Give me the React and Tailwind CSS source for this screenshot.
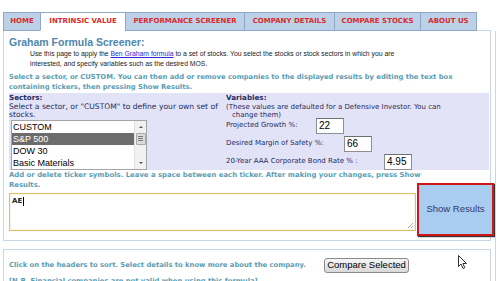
import React from "react";

const tabs = [
  { label: "HOME", w: "w-[38px]" },
  { label: "INTRINSIC VALUE", w: "w-[86px]", active: true },
  { label: "PERFORMANCE SCREENER", w: "w-[120px]" },
  { label: "COMPANY DETAILS", w: "w-[91px]" },
  { label: "COMPARE STOCKS", w: "w-[87px]" },
  { label: "ABOUT US", w: "w-[57px]" },
];

const sectors = ["CUSTOM", "S&P 500", "DOW 30", "Basic Materials"];

function Tabs() {
  return (
    <div className="flex pl-[3px] pt-[12px] relative z-10">
      {tabs.map((t) => (
        <div
          key={t.label}
          className={
            "h-[19px] -ml-px first:ml-0 flex items-center justify-center border border-[#8ea8c6] font-bold text-[7px] text-[#d92b2b] font-['DejaVu_Sans',sans-serif] " +
            t.w +
            (t.active ? " bg-white border-b-white" : " bg-[#bcd1e8]")
          }
        >
          {t.label}
        </div>
      ))}
    </div>
  );
}

function SectorList() {
  return (
    <div className="ml-[2px] w-[136px] h-[50px] border border-[#a5a5a5] bg-white flex">
      <div className="flex-1">
        {sectors.map((s, i) => (
          <div
            key={s}
            className={
              "h-[12px] leading-[12px] pl-[1px] text-[9px] font-['Liberation_Sans',sans-serif] " +
              (i === 1 ? "bg-[#6c6c6c] text-white" : "text-black")
            }
          >
            {s}
          </div>
        ))}
      </div>
      <div className="w-[12px] bg-[#f1f1f1] border-l border-[#e2e2e2] flex flex-col items-center">
        <svg width="12" height="12" viewBox="0 0 12 12">
          <path d="M4 7 L6 5 L8 7 Z" fill="#555" />
        </svg>
        <div className="w-[10px] h-[12px] bg-[#dcdcdc] border border-[#a9a9a9] rounded-[1px] flex flex-col items-center justify-center gap-[1px]">
          <div className="w-[5px] h-px bg-[#777]" />
          <div className="w-[5px] h-px bg-[#777]" />
          <div className="w-[5px] h-px bg-[#777]" />
        </div>
        <div className="flex-1" />
        <svg width="12" height="12" viewBox="0 0 12 12">
          <path d="M4 5 L6 7 L8 5 Z" fill="#555" />
        </svg>
      </div>
    </div>
  );
}

function VarRow({ label, w, value }) {
  return (
    <div className="flex items-center h-[16px]">
      <div className={"shrink-0 whitespace-nowrap " + w}>{label}</div>
      <div className="w-[28px] h-[16px] border border-[#8f8f8f] border-t-[#6f6f6f] bg-white pl-[2px] leading-[14px] text-[10px] text-black font-['Liberation_Sans',sans-serif]">
        {value}
      </div>
    </div>
  );
}

export default function App() {
  return (
    <div className="w-[500px] h-[281px] overflow-hidden bg-white relative font-['Liberation_Sans',sans-serif]">
      <Tabs />
      <div className="flex">
        <div className="ml-[3px] w-[488px] shrink-0">
          <div className="-mt-px border border-[#c7d7e6] pl-[5px] pr-[1px] pt-[5px] pb-[4px]">
            <h1 className="text-[10.5px] font-bold text-[#4e86ae] leading-[13px]">
              Graham Formula Screener:
            </h1>
            <p className="pl-[21px] text-[6.8px] leading-[9.5px] text-[#222] whitespace-nowrap">
              Use this page to apply the{" "}
              <span className="text-[#2b2bd8] underline">Ben Graham formula</span> to a set of stocks. You
              select the stocks or stock sectors in which you are
              <br />
              interested, and specify variables such as the desired MOS.
            </p>
            <p className="mt-[4px] text-[6.8px] leading-[10px] font-bold text-[#5c9db3] font-['DejaVu_Sans',sans-serif] whitespace-nowrap">
              Select a sector, or CUSTOM. You can then add or remove companies to the displayed results by
              editing the text box
              <br />
              containing tickers, then pressing Show Results.
            </p>
            <div className="mt-[1px] h-[77px] bg-[#e3e3f8] flex leading-[8.5px] text-[#1f2d5c] font-['DejaVu_Sans',sans-serif]">
              <div className="w-[217px] shrink-0 pt-[1px] text-[7.6px]">
                <div className="font-bold text-[7.2px]">Sectors:</div>
                <div className="whitespace-nowrap">
                  Select a sector, or "CUSTOM" to define your own set of
                  <br />
                  stocks.
                </div>
                <SectorList />
              </div>
              <div className="flex-1 pt-[1px] text-[7px]">
                <div className="font-bold text-[7.2px]">Variables:</div>
                <div className="whitespace-nowrap">
                  (These values are defaulted for a Defensive Investor. You can
                  <br />
                  <span className="pl-[6px]">change them)</span>
                </div>
                <div className="-mt-[2px] flex flex-col gap-[2px]">
                  <VarRow label="Projected Growth %:" w="w-[90px]" value="22" />
                  <VarRow label="Desired Margin of Safety %:" w="w-[118px]" value="66" />
                  <VarRow label="20-Year AAA Corporate Bond Rate % :" w="w-[158px]" value="4.95" />
                </div>
              </div>
            </div>
            <p className="mt-[1px] text-[6.9px] leading-[9.5px] font-bold text-[#5c9db3] font-['DejaVu_Sans',sans-serif] whitespace-nowrap">
              Add or delete ticker symbols. Leave a space between each ticker. After making your changes,
              press Show
              <br />
              Results.
            </p>
            <div className="flex items-start mt-[3px]">
              <div className="w-[407px] h-[38px] shrink-0 border border-[#e2bd6c] shadow-[inset_0_0_2px_#f2dba8] bg-white relative">
                <div className="pl-[2px] pt-[2px] flex items-center text-[7px] font-bold text-[#222] font-['DejaVu_Sans',sans-serif]">
                  AE<span className="w-px h-[9px] bg-black ml-px" />
                </div>
                <svg className="absolute right-[1px] bottom-[1px]" width="8" height="8" viewBox="0 0 8 8">
                  <path d="M7 2 L2 7 M7 5 L5 7" stroke="#aaa" strokeWidth="1" />
                </svg>
              </div>
              <div className="-mt-[10px] ml-px w-[77px] h-[53px] shrink-0 border-[2px] border-[#d11616] shadow-[1px_1px_1px_#333] bg-[#a9cdf1] flex items-center justify-center text-[9.5px] text-[#35356b]">
                Show Results
              </div>
            </div>
          </div>
          <div className="mt-[8px] h-[40px] border border-[#c7d7e6] pl-[5px] pt-[8px]">
            <div className="flex items-center">
              <span className="w-[315px] shrink-0 text-[6.8px] font-bold text-[#5c9db3] font-['DejaVu_Sans',sans-serif] whitespace-nowrap">
                Click on the headers to sort. Select details to know more about the company.
              </span>
              <div className="w-[85px] h-[15px] border border-[#8a8a8a] rounded-[3px] bg-gradient-to-b from-[#f6f6f6] to-[#d9d9d9] flex items-center justify-center text-[9.5px] text-black">
                Compare Selected
              </div>
            </div>
            <div className="mt-[3px] text-[6.8px] font-bold text-[#5c9db3] font-['DejaVu_Sans',sans-serif] whitespace-nowrap">
              [N.B. Financial companies are not valid when using this formula]
            </div>
          </div>
        </div>
        <div className="ml-[4px] w-[5px] border-l border-[#c7d7e6]" />
      </div>
      <svg className="absolute left-[458px] top-[255px]" width="10" height="15" viewBox="0 0 10 15">
        <path d="M0.5 0.5 L0.5 11.5 L3 9 L5 13.5 L6.8 12.7 L4.9 8.5 L8.5 8.5 Z" fill="#fff" stroke="#333" strokeWidth="1" />
      </svg>
    </div>
  );
}
